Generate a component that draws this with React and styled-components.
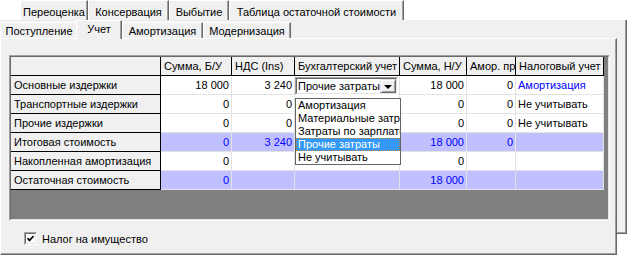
import React from "react";
import styled, { createGlobalStyle, css } from "styled-components";

const GlobalStyle = createGlobalStyle`
  html, body { margin: 0; padding: 0; background: #fff; }
  body {
    font-family: "Liberation Sans", Arial, sans-serif;
    font-size: 11px;
    color: #000;
  }
`;

const Window = styled.div`
  width: 627px;
  height: 255px;
  overflow: hidden;
  background: #fff;
`;

const TabRow = styled.div`
  display: flex;
  align-items: flex-end;
  height: ${(p) => p.$h}px;
  padding-left: ${(p) => p.$indent || 0}px;
  background: ${(p) => p.$bg};
`;

const Tab = styled.div`
  box-sizing: border-box;
  flex: none;
  width: ${(p) => p.$w}px;
  height: ${(p) => p.$h}px;
  padding-top: ${(p) => p.$pt}px;
  background: #f0f0f0;
  border-top: 1px solid #fff;
  border-left: 1px solid #fff;
  border-right: 1px solid #696969;
  box-shadow: inset -1px 0 0 #a0a0a0;
  text-align: center;
  line-height: 13px;
  white-space: nowrap;
  overflow: hidden;
  ${(p) =>
    p.$active &&
    css`
      position: relative;
      z-index: 2;
      margin-left: -2px;
      margin-bottom: -1px;
    `}
`;

const Main = styled.div`
  display: flex;
  align-items: flex-start;
`;

const FrontColumn = styled.div`
  width: 617px;
  flex: none;
  background: #f0f0f0;
`;

const BackEdge = styled.div`
  box-sizing: border-box;
  width: 10px;
  height: 214px;
  background: #f0f0f0;
  border-right: 1px solid #696969;
  border-bottom: 1px solid #696969;
  box-shadow: inset -1px -1px 0 #a0a0a0;
`;

const Sheet = styled.div`
  box-sizing: border-box;
  height: 217px;
  background: #f0f0f0;
  border-top: 1px solid #fff;
  border-left: 1px solid #fff;
  border-right: 1px solid #696969;
  border-bottom: 1px solid #696969;
  box-shadow: inset -1px -1px 0 #a0a0a0;
  padding: 16px 0 0 8px;
  display: flex;
  flex-direction: column;
`;

const GridFrame = styled.div`
  box-sizing: border-box;
  width: 601px;
  height: 166px;
  border: 1px solid;
  border-color: #a0a0a0 #fff #fff #a0a0a0;
`;

const GridInner = styled.div`
  box-sizing: border-box;
  height: 100%;
  border: 1px solid;
  border-color: #696969 #e3e3e3 #e3e3e3 #696969;
  background: #808080;
`;

const Table = styled.div`
  display: grid;
  grid-template-columns: 150px 71px 63px 105px 67px 49px 88px;
  grid-auto-rows: 19px;
  width: max-content;
`;

const Cell = styled.div`
  box-sizing: border-box;
  min-width: 0;
  border-right: 1px solid ${(p) => (p.$fixed ? "#000" : "#e3e3e3")};
  border-bottom: 1px solid ${(p) => (p.$fixed ? "#000" : "#e3e3e3")};
  background: ${(p) => (p.$fixed ? "#f0f0f0" : p.$hl ? "#c0c0ff" : "#fff")};
  color: ${(p) => (p.$blue ? "#0000ff" : "#000")};
  text-align: ${(p) => (p.$right ? "right" : "left")};
  padding: ${(p) => (p.$right ? "0 2px 0 0" : `0 0 0 ${p.$fixed ? 3 : 2}px`)};
  line-height: 19px;
  white-space: nowrap;
  overflow: hidden;
`;

const EditorCell = styled.div`
  box-sizing: border-box;
  position: relative;
  z-index: 5;
  border-right: 1px solid #e3e3e3;
  border-bottom: 1px solid #e3e3e3;
  background: #fff;
`;

const Combo = styled.div`
  position: relative;
  box-sizing: border-box;
  width: 103px;
  height: 18px;
  margin-top: 1px;
  border: 1px solid;
  border-color: #a0a0a0 #fff #fff #a0a0a0;
  background: #fff;
`;

const ComboInner = styled.div`
  box-sizing: border-box;
  height: 100%;
  display: flex;
  border: 1px solid;
  border-color: #696969 #e3e3e3 #e3e3e3 #696969;
`;

const ComboText = styled.div`
  flex: 1;
  min-width: 0;
  padding-left: 1px;
  line-height: 14px;
  white-space: nowrap;
  overflow: hidden;
`;

const ComboButton = styled.div`
  box-sizing: border-box;
  flex: none;
  width: 16px;
  height: 14px;
  display: flex;
  align-items: center;
  justify-content: center;
  background: #f0f0f0;
  border: 1px solid;
  border-color: #e3e3e3 #696969 #696969 #e3e3e3;
  box-shadow: inset 1px 1px 0 #fff, inset -1px -1px 0 #a0a0a0;
`;

const Arrow = styled.span`
  width: 0;
  height: 0;
  border-left: 4px solid transparent;
  border-right: 4px solid transparent;
  border-top: 4px solid #000;
  margin-top: 1px;
`;

const DropList = styled.div`
  position: absolute;
  left: -1px;
  top: 20px;
  width: 106px;
  box-sizing: border-box;
  border: 1px solid #646464;
  background: #fff;
`;

const DropItem = styled.div`
  box-sizing: border-box;
  height: 13px;
  line-height: 13px;
  padding-left: 2px;
  white-space: nowrap;
  overflow: hidden;
  ${(p) =>
    p.$selected &&
    css`
      background: #3399ff;
      color: #fff;
      outline: 1px dotted #c8803c;
      outline-offset: -1px;
    `}
`;

const CheckRow = styled.label`
  display: flex;
  align-items: center;
  gap: 5px;
  margin: 11px 0 0 15px;
`;

const CheckBox = styled.span`
  box-sizing: border-box;
  width: 13px;
  height: 13px;
  border: 1px solid;
  border-color: #a0a0a0 #fff #fff #a0a0a0;
  display: flex;
`;

const CheckFace = styled.span`
  box-sizing: border-box;
  flex: 1;
  border: 1px solid;
  border-color: #696969 #e3e3e3 #e3e3e3 #696969;
  background: #fff;
  display: flex;
  align-items: center;
  justify-content: center;
`;

const backTabs = [
  ["Переоценка", 68],
  ["Консервация", 81],
  ["Выбытие", 60],
  ["Таблица остаточной стоимости", 175],
];

const frontTabs = [
  ["Поступление", 78],
  ["Учет", 46, true],
  ["Амортизация", 81],
  ["Модернизация", 88],
];

const headers = ["", "Сумма, Б/У", "НДС (Ins)", "Бухгалтерский учет", "Сумма, Н/У", "Амор. пр", "Налоговый учет"];

const rows = [
  { label: "Основные издержки", cells: ["18 000", "3 240", "combo", "18 000", "0", "Амортизация"], blueTax: true },
  { label: "Транспортные издержки", cells: ["0", "0", "", "0", "0", "Не учитывать"] },
  { label: "Прочие издержки", cells: ["0", "0", "", "0", "0", "Не учитывать"] },
  { label: "Итоговая стоимость", cells: ["0", "3 240", "", "18 000", "0", ""], hl: true },
  { label: "Накопленная амортизация", cells: ["0", "", "", "0", "", ""] },
  { label: "Остаточная стоимость", cells: ["0", "", "", "18 000", "", ""], hl: true },
];

const options = ["Амортизация", "Материальные затраты", "Затраты по зарплате", "Прочие затраты", "Не учитывать"];

const CostEditor = () => (
  <EditorCell>
    <Combo>
      <ComboInner>
        <ComboText>Прочие затраты</ComboText>
        <ComboButton>
          <Arrow />
        </ComboButton>
      </ComboInner>
      <DropList>
        {options.map((o) => (
          <DropItem key={o} $selected={o === "Прочие затраты"}>
            {o}
          </DropItem>
        ))}
      </DropList>
    </Combo>
  </EditorCell>
);

export default function App() {
  return (
    <>
      <GlobalStyle />
      <Window>
        <TabRow $h={20} $indent={20} $bg="#fff">
          {backTabs.map(([t, w]) => (
            <Tab key={t} $w={w} $h={20} $pt={5}>
              {t}
            </Tab>
          ))}
        </TabRow>
        <Main>
          <FrontColumn>
            <TabRow $h={18} $bg="#f0f0f0">
              {frontTabs.map(([t, w, active]) => (
                <Tab key={t} $w={w} $h={active ? 19 : 16} $pt={2} $active={active}>
                  {t}
                </Tab>
              ))}
            </TabRow>
            <Sheet>
              <GridFrame>
                <GridInner>
                  <Table>
                    {headers.map((h, i) => (
                      <Cell key={"h" + i} $fixed>
                        {h}
                      </Cell>
                    ))}
                    {rows.map((r) => (
                      <React.Fragment key={r.label}>
                        <Cell $fixed>{r.label}</Cell>
                        {r.cells.map((v, i) => {
                          if (v === "combo") return <CostEditor key={i} />;
                          const isTax = i === 5;
                          return (
                            <Cell
                              key={i}
                              $hl={r.hl}
                              $right={!isTax}
                              $blue={r.hl || (isTax && r.blueTax)}
                            >
                              {v}
                            </Cell>
                          );
                        })}
                      </React.Fragment>
                    ))}
                  </Table>
                </GridInner>
              </GridFrame>
              <CheckRow>
                <CheckBox>
                  <CheckFace>
                    <svg width="9" height="9" viewBox="0 0 9 9">
                      <path d="M1.5 4.2 L3.5 6.4 L7.6 2" fill="none" stroke="#000" strokeWidth="1.7" />
                    </svg>
                  </CheckFace>
                </CheckBox>
                Налог на имущество
              </CheckRow>
            </Sheet>
          </FrontColumn>
          <BackEdge />
        </Main>
      </Window>
    </>
  );
}
